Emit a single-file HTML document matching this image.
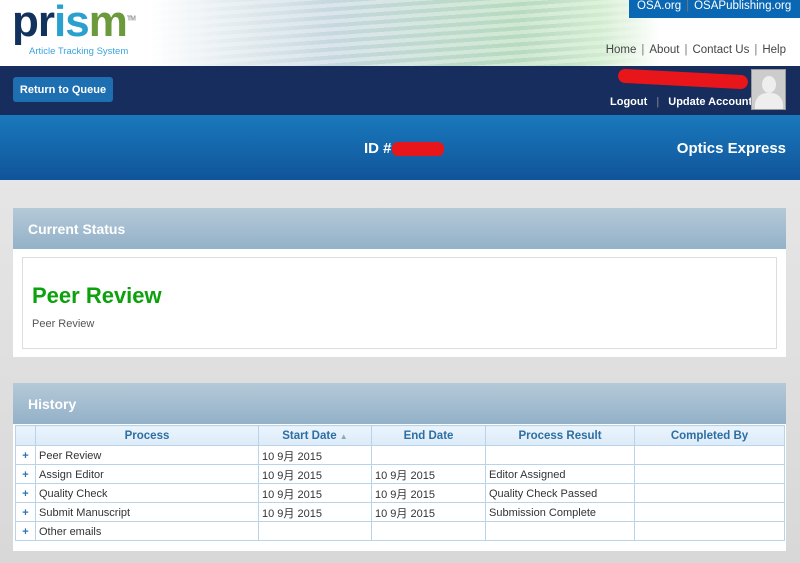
<!DOCTYPE html>
<html><head><meta charset="utf-8"><style>
*{margin:0;padding:0;box-sizing:border-box}
body{width:800px;height:563px;overflow:hidden;font-family:"Liberation Sans","Noto Sans CJK SC",sans-serif;background:linear-gradient(#ececec,#d8d8d8);position:relative}
.a{position:absolute}
.hdr{left:0;top:0;width:800px;height:66px;background:linear-gradient(90deg,#fff 0,#fff 150px,#cfdde6 330px,#bfe0c4 520px,#d8f0d4 600px,#fff 660px,#fff 800px)}
.streak{left:150px;top:0;width:510px;height:66px;background:repeating-linear-gradient(176deg,rgba(255,255,255,.25) 0 4px,rgba(120,170,150,.10) 4px 8px);-webkit-mask:linear-gradient(90deg,transparent,#000 40%,#000 80%,transparent)}
.logo{left:12px;top:-3px;font-size:44px;font-weight:bold;color:#12325e;letter-spacing:-1px}
.logo span{color:#2aa0cf}.logo em{font-style:normal;color:#6a9a3c}
.tag{left:29px;top:46px;font-size:9.5px;color:#3aa4de}
.osa{left:629px;top:0;width:171px;height:18px;background:#0a67b3;color:#fff;font-size:11.5px;padding:0 8px;line-height:12px}
.nav{right:14px;top:44px;font-size:11.5px;color:#444}
.nav b,.osa b{font-weight:normal;margin:0 5px;color:#777}
.navy{left:0;top:66px;width:800px;height:49px;background:#162d5d}
.btn{left:13px;top:77px;width:100px;height:25px;background:#1d6fb2;border-radius:3px;color:#fff;font-size:11px;font-weight:bold;line-height:26px;text-align:center}
.lo{left:610px;top:96px;color:#fff;font-size:11px;font-weight:bold}
.red{left:618px;top:72px;width:130px;height:14px;background:#e8161b;border-radius:7px;transform:rotate(3deg)}
.av{left:751px;top:69px;width:35px;height:41px;background:#ccc;border:1px solid #999;overflow:hidden}
.blue{left:0;top:115px;width:800px;height:65px;background:linear-gradient(#1a79bc,#10549a)}
.id{left:364px;top:140px;color:#fff;font-size:15px;font-weight:bold}
.oe{right:14px;top:140px;color:#fff;font-size:15px;font-weight:bold}
.panel{left:13px;width:773px;background:#fff}
.ph{height:41px;background:linear-gradient(#b5c9d8,#93b1c8);color:#fff;font-size:14px;font-weight:bold;padding:13px 15px}
table{border-collapse:collapse;position:absolute;left:2px;top:42px;width:770px;font-size:11px;color:#333}
td,th{border:1px solid #b9d3e8;height:19px;padding:1px 3px 0;text-align:left}
th{background:linear-gradient(#eaf4fd,#dcebf8);color:#2d6ea3;text-align:center;height:20px;font-size:11.5px}
td.p{color:#2a74b6;font-weight:bold;text-align:center;width:20px}
</style></head><body>
<div class="a hdr"></div><div class="a streak"></div>
<div class="a logo">pr<span>i</span><span>s</span><em>m</em><sup style="font-size:7px;color:#999">TM</sup></div>
<div class="a tag">Article Tracking System</div>
<div class="a osa">OSA.org<b>|</b><span style="color:#fff">OSAPublishing.org</span></div>
<div class="a nav">Home<b>|</b>About<b>|</b>Contact Us<b>|</b>Help</div>
<div class="a navy"></div>
<div class="a btn">Return to Queue</div>
<div class="a red"></div>
<div class="a lo">Logout <span style="color:#889;margin:0 6px;font-weight:normal">|</span> Update Account</div>
<div class="a av"><div style="position:absolute;left:10px;top:6px;width:14px;height:17px;border-radius:50%;background:#eee"></div><div style="position:absolute;left:3px;top:23px;width:28px;height:22px;border-radius:12px 12px 0 0;background:#eee"></div></div>
<div class="a blue"></div>
<div class="a id">ID #<span style="display:inline-block;width:52px;height:14px;background:#e8161b;border-radius:6px;vertical-align:middle"></span></div>
<div class="a oe">Optics Express</div>
<div class="a panel" style="top:208px;height:149px">
<div class="ph">Current Status</div>
<div class="a" style="left:9px;top:49px;width:755px;height:92px;border:1px solid #ddd">
<div style="position:absolute;left:9px;top:25px;font-size:22px;font-weight:bold;color:#0da20d">Peer Review</div>
<div style="position:absolute;left:9px;top:60px;font-size:11px;color:#555">Peer Review</div></div>
</div>
<div class="a panel" style="top:383px;height:168px">
<div class="ph">History</div>
<table>
<tr><th style="width:20px"></th><th style="width:223px">Process</th><th style="width:113px">Start Date <span style="font-size:8px;color:#8ab">&#9650;</span></th><th style="width:114px">End Date</th><th style="width:149px">Process Result</th><th>Completed By</th></tr>
<tr><td class="p">+</td><td>Peer Review</td><td>10 9月 2015</td><td></td><td></td><td></td></tr>
<tr><td class="p">+</td><td>Assign Editor</td><td>10 9月 2015</td><td>10 9月 2015</td><td>Editor Assigned</td><td></td></tr>
<tr><td class="p">+</td><td>Quality Check</td><td>10 9月 2015</td><td>10 9月 2015</td><td>Quality Check Passed</td><td></td></tr>
<tr><td class="p">+</td><td>Submit Manuscript</td><td>10 9月 2015</td><td>10 9月 2015</td><td>Submission Complete</td><td></td></tr>
<tr><td class="p">+</td><td>Other emails</td><td></td><td></td><td></td><td></td></tr>
</table>
</div>
</body></html>
